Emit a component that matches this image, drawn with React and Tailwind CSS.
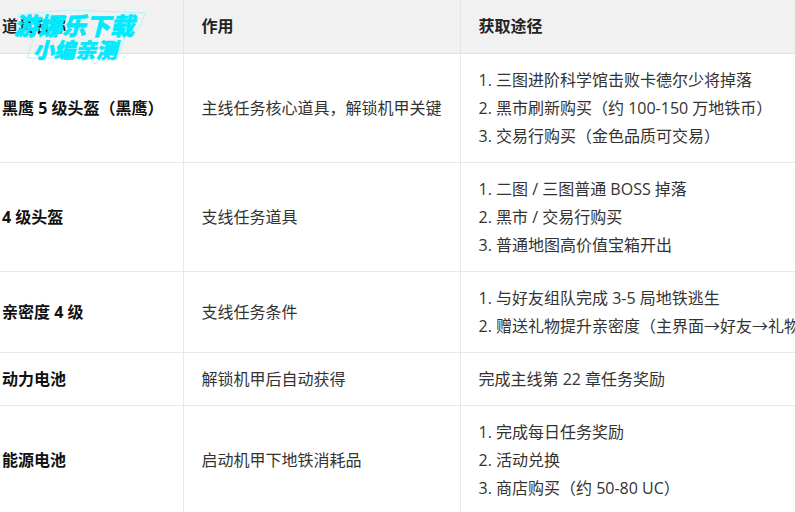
const rows = [
  { name: "黑鹰 5 级头盔（黑鹰）", use: "主线任务核心道具，解锁机甲关键", ways: ["1. 三图进阶科学馆击败卡德尔少将掉落", "2. 黑市刷新购买（约 100-150 万地铁币）", "3. 交易行购买（金色品质可交易）"] },
  { name: "4 级头盔", use: "支线任务道具", ways: ["1. 二图 / 三图普通 BOSS 掉落", "2. 黑市 / 交易行购买", "3. 普通地图高价值宝箱开出"] },
  { name: "亲密度 4 级", use: "支线任务条件", ways: ["1. 与好友组队完成 3-5 局地铁逃生", "2. 赠送礼物提升亲密度（主界面→好友→礼物）"] },
  { name: "动力电池", use: "解锁机甲后自动获得", ways: ["完成主线第 22 章任务奖励"] },
  { name: "能源电池", use: "启动机甲下地铁消耗品", ways: ["1. 完成每日任务奖励", "2. 活动兑换", "3. 商店购买（约 50-80 UC）"] },
];

function Watermark() {
  return (
    <div className="absolute left-[16px] top-[10px] w-[132px] h-[56px]">
      <svg className="absolute inset-0" width="132" height="56" viewBox="0 0 132 56">
        <path d="M2 5 L51 0 L129 3 L124 17 L107 30 L102 48 L84 50 L79 54 L74 48 L11 48 L17 30 L2 23 Z" fill="none" stroke="#b5f3fb" strokeWidth="1" />
      </svg>
      <div className="relative flex flex-col items-start pt-[3px] italic font-black text-[#00eaff] [-webkit-text-stroke:0.6px_#00eaff]">
        <span className="text-[24px] leading-[26px] whitespace-nowrap -ml-[2px]">游娜乐下载</span>
        <span className="text-[21px] leading-[23px] whitespace-nowrap ml-[17px]">小编亲测</span>
      </div>
    </div>
  );
}

export default function App() {
  return (
    <div className="relative w-[795px] h-[512px] overflow-hidden bg-white text-[16px] leading-[28px] text-[#333] font-['Open_Sans','Noto_Sans_CJK_SC',sans-serif]">
      <table className="table-fixed border-collapse w-[811px] -ml-[16px] whitespace-nowrap">
        <thead>
          <tr className="bg-[#f1f1f1] text-[#222] border-b border-[#e2e2e2]">
            <th className="w-[199px] h-[53px] pl-[18px] text-left font-bold border-r border-[#e6e6e6]">道具名称</th>
            <th className="w-[277px] pl-[18px] text-left font-bold border-r border-[#e6e6e6]">作用</th>
            <th className="pl-[18px] text-left font-bold">获取途径</th>
          </tr>
        </thead>
        <tbody>
          {rows.map((row) => (
            <tr key={row.name} className="border-b border-[#e8e8e8]">
              <td className="pl-[18px] py-[12px] font-bold text-[#111] border-r border-[#e8e8e8]">{row.name}</td>
              <td className="pl-[18px] py-[12px] border-r border-[#e8e8e8]">{row.use}</td>
              <td className="pl-[18px] py-[12px]">
                {row.ways.map((way) => (
                  <div key={way}>{way}</div>
                ))}
              </td>
            </tr>
          ))}
        </tbody>
      </table>
      <Watermark />
    </div>
  );
}
